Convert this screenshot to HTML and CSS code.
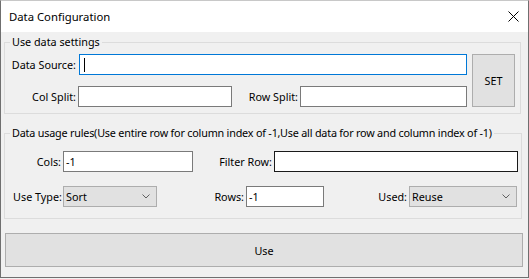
FILE: index.html
```html
<!DOCTYPE html>
<html>
<head>
<meta charset="utf-8">
<link rel="stylesheet" href="styles.css">
</head>
<body>
<div class="window">
  <div class="titlebar">
    <span class="title">Data Configuration</span>
    <svg class="close" width="11" height="11" viewBox="0 0 11 11"><path d="M0.5 0.5L10.5 10.5M10.5 0.5L0.5 10.5" stroke="#000" stroke-width="1" fill="none"/></svg>
  </div>
  <div class="client">
    <fieldset class="group g1">
      <legend>Use data settings</legend>
      <div class="g1-body">
        <div class="rows">
          <div class="row">
            <span class="lbl w-ds">Data Source:</span>
            <div class="tb tb-focus w-ds-in"><span class="caret"></span></div>
          </div>
          <div class="row">
            <span class="lbl w-cs">Col Split:</span>
            <div class="tb w-cs-in"></div>
            <span class="lbl w-rs">Row Split:</span>
            <div class="tb w-rs-in"></div>
          </div>
        </div>
        <button class="btn set">SET</button>
      </div>
    </fieldset>
    <fieldset class="group g2">
      <legend class="long">Data usage rules(Use entire row for column index of -1,Use all data for row and column index of -1)</legend>
      <div class="g2-body">
        <div class="row">
          <span class="lbl w-cols">Cols:</span>
          <div class="tb w-cols-in">-1</div>
          <span class="lbl w-fr">Filter Row:</span>
          <div class="tb tb-hover w-fr-in"></div>
        </div>
        <div class="row">
          <span class="lbl w-ut">Use Type:</span>
          <div class="combo w-ut-in"><span>Sort</span><svg class="chev" width="8" height="5" viewBox="0 0 8 5"><path d="M0.5 0.5L4 4L7.5 0.5" stroke="#606060" stroke-width="1" fill="none"/></svg></div>
          <span class="lbl w-rows">Rows:</span>
          <div class="tb w-rows-in">-1</div>
          <span class="lbl w-used">Used:</span>
          <div class="combo w-used-in"><span>Reuse</span><svg class="chev" width="8" height="5" viewBox="0 0 8 5"><path d="M0.5 0.5L4 4L7.5 0.5" stroke="#606060" stroke-width="1" fill="none"/></svg></div>
        </div>
      </div>
    </fieldset>
    <button class="btn use">Use</button>
  </div>
</div>
</body>
</html>
```
FILE: styles.css
```css
html, body {
  margin: 0;
  padding: 0;
  background: #f0f0f0;
}
body {
  font-family: "Noto Sans", "DejaVu Sans", sans-serif;
  font-size: 10.8px;
  color: #000;
}
.window {
  box-sizing: border-box;
  width: 529px;
  height: 278px;
  border: 1px solid #6f6f6f;
  border-top-color: #c8c8c8;
  background: #f0f0f0;
  display: flex;
  flex-direction: column;
}
.titlebar {
  height: 31px;
  background: #fff;
  display: flex;
  align-items: center;
  justify-content: space-between;
  padding: 0 9px 0 8px;
  flex: none;
}
.title {
  font-size: 11.3px;
  line-height: 16px;
}
.close {
  display: block;
}
.client {
  flex: 1;
  padding: 3px 6px 0 3px;
  display: flex;
  flex-direction: column;
  align-items: flex-start;
}
.group {
  margin: 0;
  padding: 0;
  border: 1px solid #dcdcdc;
  min-width: 0;
  box-sizing: border-box;
}
.group legend {
  margin-left: 5px;
  padding: 0 2px;
  line-height: 14px;
  white-space: nowrap;
}
.group legend.long {
  letter-spacing: -0.2px;
}
.g1 {
  width: 517px;
}
.g1-body {
  display: flex;
  padding: 5px 0 6px 0;
}
.rows {
  width: 462px;
  display: flex;
  flex-direction: column;
  gap: 11px;
}
.row {
  display: flex;
  align-items: center;
  height: 21px;
}
.lbl {
  box-sizing: border-box;
  text-align: right;
  padding-right: 2px;
  white-space: nowrap;
  line-height: 21px;
}
.tb {
  box-sizing: border-box;
  height: 21px;
  border: 1px solid #7a7a7a;
  background: #fff;
  padding: 0 2px;
  display: flex;
  align-items: center;
  line-height: 19px;
}
.tb-focus {
  border-color: #0078d7;
}
.tb-hover {
  border-color: #1a1a1a;
}
.caret {
  display: block;
  width: 1px;
  height: 14px;
  background: #000;
  margin-left: 2px;
}
.combo {
  box-sizing: border-box;
  height: 21px;
  background: #e1e1e1;
  border: 1px solid #adadad;
  display: flex;
  align-items: center;
  justify-content: space-between;
  padding: 0 6px 0 2px;
  line-height: 19px;
}
.chev {
  display: block;
}
.btn {
  box-sizing: border-box;
  background: #e1e1e1;
  border: 1px solid #adadad;
  font-family: inherit;
  font-size: inherit;
  color: #000;
  padding: 0;
  margin: 0;
}
.set {
  margin-left: 5px;
  width: 43px;
  height: 53px;
}
.g2 {
  width: 518px;
  margin-top: 12px;
}
.g2-body {
  display: flex;
  flex-direction: column;
  gap: 14px;
  padding: 11px 0 11px 0;
}
.use {
  margin-top: 14px;
  margin-left: 1px;
  width: 518px;
  height: 34px;
}
/* widths */
.w-ds { width: 74px; padding-right: 3px; }
.w-ds-in { width: 388px; }
.w-cs { width: 73px; }
.w-cs-in { width: 154px; }
.w-rs { width: 68px; }
.w-rs-in { width: 167px; }
.w-cols { width: 58px; }
.w-cols-in { width: 130px; }
.w-fr { width: 81px; }
.w-fr-in { width: 244px; }
.w-ut { width: 58px; padding-right: 1px; }
.w-ut-in { width: 94px; }
.w-rows { width: 89px; }
.w-rows-in { width: 78px; }
.w-used { width: 85px; }
.w-used-in { width: 108px; }
```
